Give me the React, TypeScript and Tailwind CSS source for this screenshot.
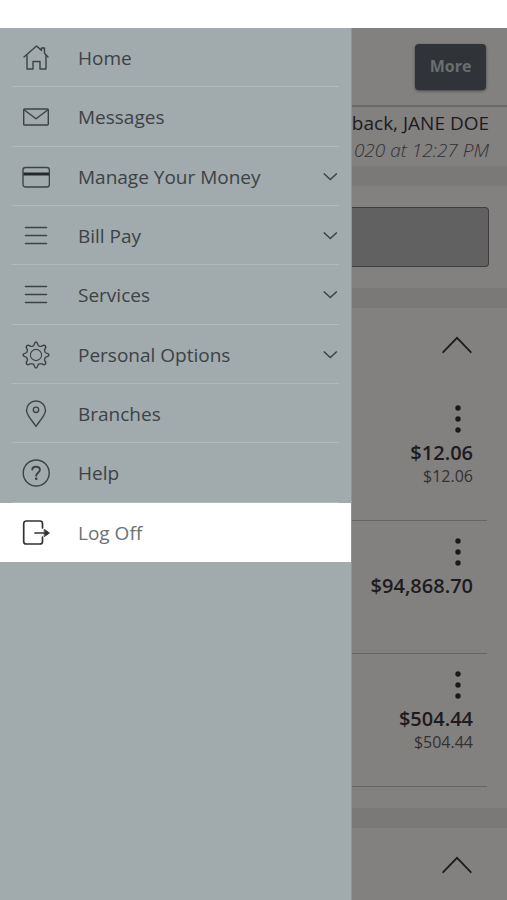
import type { ReactNode } from "react";

function Icon({ children }: { children: ReactNode }) {
  return (
    <svg
      viewBox="0 0 28 28"
      className="h-7 w-7 shrink-0"
      fill="none"
      stroke="currentColor"
      strokeWidth="1.4"
      strokeLinecap="round"
      strokeLinejoin="round"
      aria-hidden="true"
    >
      {children}
    </svg>
  );
}

const home = (
  <Icon>
    <path d="M2 13 14.5 2l5 4.4V4h3v5.2l3.5 3.8" />
    <path d="M5 11.5V25h6v-7.5h7V25h6V11.5" />
  </Icon>
);

const mail = (
  <Icon>
    <rect x="1.7" y="6" width="24.6" height="16" rx="1" />
    <path d="m2 6.7 12 9 12-9" />
  </Icon>
);

const card = (
  <Icon>
    <rect x="1" y="4.5" width="26.4" height="19.5" rx="2.5" />
    <path d="M1.5 11h25.5" stroke="#26292b" strokeWidth="3" strokeLinecap="butt" />
  </Icon>
);

const lines = (
  <Icon>
    <path d="M3.5 5.500h21M3.5 13.500h21M3.5 21.500h21" strokeWidth="1.6" />
  </Icon>
);

const gear = (
  <Icon>
    <path d="M11.5 4.800C12.300 4.400 12.200 1 14 1S15.700 4.400 16.500 4.800C17.500 5.200 19 5.600 19.700 5.200C21 4.200 22 3.500 23.200 4.800S23.800 7 22.800 8.300C22.400 9 22.800 10.500 23.200 11.500C23.600 12.300 27 12.200 27 14S23.600 15.700 23.200 16.500C22.800 17.500 22.400 19 22.800 19.700C23.800 21 24.500 22 23.200 23.200S21 23.800 19.700 22.800C19 22.400 17.500 22.800 16.500 23.200C15.700 23.600 15.800 27 14 27S12.300 23.600 11.500 23.200C10.500 22.800 9 22.400 8.300 22.800C7 23.800 6 24.500 4.800 23.200S4.200 21 5.200 19.700C5.600 19 5.200 17.500 4.800 16.500C4.400 15.700 1 15.800 1 14S4.400 12.300 4.800 11.500C5.200 10.500 5.600 9 5.200 8.300C4.200 7 3.500 6 4.800 4.800S7 4.200 8.300 5.200C9 5.600 10.500 5.200 11.500 4.800Z" />
    <circle cx="14" cy="14" r="5.600" strokeWidth="1.1" />
  </Icon>
);

const pin = (
  <Icon>
    <path d="M14 26.500C11 21.500 4.500 15.500 4.500 10.200a9.500 9.200 0 0 1 19 0C23.500 15.500 17 21.500 14 26.500Z" />
    <circle cx="14" cy="9.800" r="2.700" />
  </Icon>
);

const help = (
  <Icon>
    <circle cx="14.200" cy="14" r="13" />
    <path d="M10.300 10.600C10.300 8.700 11.900 7.700 14 7.700s3.900 1.100 3.900 3.100c0 2.900-3.700 2.900-3.700 6" strokeWidth="1.900" />
    <circle cx="14.200" cy="19.700" r=".6" fill="currentColor" />
  </Icon>
);

const logOff = (
  <Icon>
    <path d="M20.500 9V4.500A2.500 2.500 0 0 0 18 2H4.200a2.500 2.500 0 0 0-2.500 2.500v18A2.500 2.500 0 0 0 4.200 25H18a2.500 2.500 0 0 0 2.500-2.500V18M13 14h9" strokeWidth="1.700" />
    <path d="m22.500 10.500 5 3.500-5 3.500Z" fill="currentColor" strokeWidth=".8" />
  </Icon>
);

const items = [
  { label: "Home", icon: home },
  { label: "Messages", icon: mail },
  { label: "Manage Your Money", icon: card, expandable: true },
  { label: "Bill Pay", icon: lines, expandable: true },
  { label: "Services", icon: lines, expandable: true },
  { label: "Personal Options", icon: gear, expandable: true },
  { label: "Branches", icon: pin },
  { label: "Help", icon: help },
];

const rowLayout = "flex w-full items-center gap-7 text-left text-[19px]";

function Drawer() {
  return (
    <nav className="w-[352px] shrink-0 border-r border-[#8f9698] bg-[#a1aaac] text-[#3c4346]">
      <ul className="grid h-[534px] grid-rows-9">
        {items.map(({ label, icon, expandable }) => (
          <li key={label} className="mx-3 flex border-b border-[#b3babb]">
            {expandable ? (
              <button type="button" aria-expanded="false" className={`${rowLayout} pt-0.5 pl-[10px]`}>
                {icon}
                <span className="grow">{label}</span>
                <svg viewBox="0 0 16 10" className="h-[10px] w-4" fill="none" stroke="currentColor" strokeWidth="1.5" aria-hidden="true">
                  <path d="m.8 1.500 6.500 6 6.500-6" />
                </svg>
              </button>
            ) : (
              <a href="#" className={`${rowLayout} pt-0.5 pl-[10px]`}>
                {icon}
                <span>{label}</span>
              </a>
            )}
          </li>
        ))}
        <li className="flex bg-white">
          <button type="button" className={`${rowLayout} pt-px pl-[22px] text-[#303234]`}>
            {logOff}
            <span className="text-[#6d7275]">Log Off</span>
          </button>
        </li>
      </ul>
    </nav>
  );
}

function CollapseButton() {
  return (
    <button type="button" aria-label="Collapse" className="flex h-[74px] items-center self-end pr-[35px]">
      <svg viewBox="0 0 30 18" className="h-[18px] w-[30px]" fill="none" stroke="#1d1b1d" strokeWidth="1.800" strokeLinecap="round" aria-hidden="true">
        <path d="M1.200 16.200 15 1.800l13.800 14.400" />
      </svg>
    </button>
  );
}

function Account({ balance, available }: { balance: string; available?: string }) {
  return (
    <li className="mr-5 flex h-[133px] flex-col items-end border-b border-[#666465] pt-3 pr-[14px]">
      <button type="button" aria-label="Account options" className="px-2 pt-1 pb-1.5">
        <svg viewBox="0 0 14 30" className="h-[30px] w-[14px]" fill="#1b1a1b" aria-hidden="true">
          <circle cx="7" cy="4" r="2.700" />
          <circle cx="7" cy="15" r="2.700" />
          <circle cx="7" cy="26" r="2.700" />
        </svg>
      </button>
      <span className="text-xl leading-[26px] font-semibold text-[#1d1b1d]">{balance}</span>
      {available && <span className="text-base leading-5 text-[#333132]">{available}</span>}
    </li>
  );
}

function Content() {
  return (
    <main className="min-w-0 flex-1 overflow-hidden bg-[#838080]">
      <header className="flex h-[79px] items-center justify-end border-b-2 border-[#6a6868] pr-[21px]">
        <button type="button" className="h-[46px] w-[71px] rounded-[4px] bg-[#303337] pb-0.5 text-base font-bold text-[#6b6e71] shadow-[0_1px_3px_#444]">
          More
        </button>
      </header>
      <section className="flex h-[59px] flex-col items-end pt-0.5 pr-[18px] whitespace-nowrap">
        <p className="text-[19px] leading-7 text-[#1d1b1d]">back, JANE DOE</p>
        <p className="text-[19px] leading-[26px] font-light text-[#333132] italic">020 at 12:27 PM</p>
      </section>
      <section className="border-y-[20px] border-[#7b7878] py-[21px] pr-[18px]">
        <div className="h-[60px] rounded-r-[4px] border border-l-0 border-[#3f3d3e] bg-[#626161]" />
      </section>
      <section className="flex flex-col">
        <CollapseButton />
        <ul className="pt-1.5">
          <Account balance="$12.06" available="$12.06" />
          <Account balance="$94,868.70" />
          <Account balance="$504.44" available="$504.44" />
        </ul>
      </section>
      <section className="mt-[21px] flex flex-col border-t-[20px] border-[#7b7878]">
        <CollapseButton />
      </section>
    </main>
  );
}

export default function App() {
  return (
    <div className="flex h-screen flex-col overflow-hidden bg-white pt-7 font-['Open_Sans',sans-serif]">
      <div className="flex min-h-0 flex-1">
        <Drawer />
        <Content />
      </div>
    </div>
  );
}
